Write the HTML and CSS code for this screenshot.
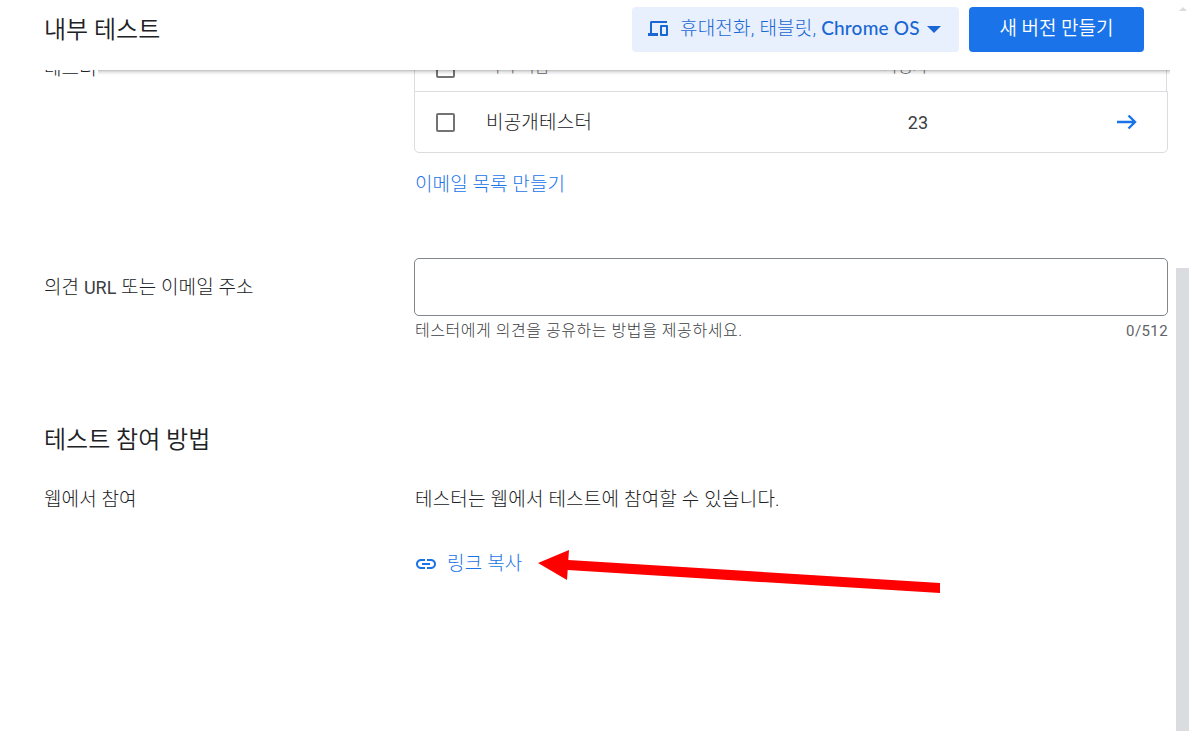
FILE: index.html
```html
<!DOCTYPE html>
<html lang="ko">

<head>
  <meta charset="UTF-8" />
  <meta name="viewport" content="width=device-width, initial-scale=1.0" />
  <title>내부 테스트</title>
  <link rel="stylesheet" href="styles.css">
</head>

<body>
  <header class="topbar">
    <h1>내부 테스트</h1>
    <button class="btn btn-devices">
      <svg class="devices-icon" viewBox="0 0 20 15" width="20" height="15"><path fill="currentColor" d="M3.500 0H19v2H4v10h6v3H0v-3h2V1.500C2 .7 2.700 0 3.500 0z"/><path fill="none" stroke="currentColor" stroke-width="2" stroke-linejoin="round" d="M13 5h6v9h-6z"/></svg>
      <span class="devices-text">휴대전화, 태블릿, <span class="product">Chrome OS</span></span>
      <span class="caret"></span>
    </button>
    <button class="btn btn-primary"><span>새 버전 만들기</span></button>
  </header>

  <main>
    <section class="row row-testers">
      <div class="label">테스터</div>
      <div class="field">
        <div class="list-head">
          <span class="checkbox"></span>
          <span class="name">목록 이름</span>
          <span class="count">사용자</span>
        </div>
        <div class="list-row">
          <span class="checkbox"></span>
          <span class="name">비공개테스터</span>
          <span class="count latin">23</span>
          <svg class="arrow-icon" viewBox="0 0 22 16" width="22" height="16"><path d="M1 8h18M12.500 1.500L19 8l-6.500 6.500" fill="none" stroke="currentColor" stroke-width="2.400"/></svg>
        </div>
        <a class="link">이메일 목록 만들기</a>
      </div>
    </section>

    <section class="row row-feedback">
      <div class="label">의견 <span class="latin">URL</span> 또는 이메일 주소</div>
      <div class="field">
        <input type="text" class="text-input">
        <div class="hint">
          <span class="hint-text">테스터에게 의견을 공유하는 방법을 제공하세요.</span>
          <span class="counter">0/512</span>
        </div>
      </div>
    </section>

    <h2>테스트 참여 방법</h2>

    <section class="row">
      <div class="label">웹에서 참여</div>
      <div class="field">
        <div class="desc">테스터는 웹에서 테스트에 참여할 수 있습니다.</div>
        <a class="link copy-link">
          <svg viewBox="2 7 20 10" width="20" height="10"><path fill="currentColor" d="M3.900 12c0-1.710 1.390-3.100 3.100-3.100h4V7H7c-2.760 0-5 2.240-5 5s2.240 5 5 5h4v-1.900H7c-1.710 0-3.100-1.390-3.100-3.100zM8 13h8v-2H8v2zm9-6h-4v1.900h4c1.710 0 3.100 1.390 3.100 3.100s-1.390 3.100-3.100 3.100h-4V17h4c2.760 0 5-2.240 5-5s-2.240-5-5-5z"/></svg>
          <span>링크 복사</span>
        </a>
      </div>
    </section>
  </main>

  <div class="scrollbar">
    <span class="scroll-up"></span>
    <span class="scroll-thumb"></span>
  </div>

  <svg class="pointer" viewBox="0 0 402 44" width="402" height="44"><path fill="#fe0000" d="M0 13L31 0l-.7 10L402 33v10L29.700 20l-.7 10z"/></svg>
</body>

</html>
```
FILE: styles.css
```css
* {
  box-sizing: border-box;
}

body {
  margin: 0;
  height: 731px;
  overflow: hidden;
  position: relative;
  background: #fff;
  color: #202124;
  font-family: Roboto, 'Noto Sans CJK KR', sans-serif;
  font-size: 19px;
  font-weight: 300;
  letter-spacing: 0.2px;
}

.topbar {
  position: fixed;
  top: 0;
  left: 0;
  z-index: 2;
  width: 1170px;
  height: 70px;
  padding: 7px 26px 0 44px;
  display: flex;
  align-items: flex-start;
  gap: 10px;
  background: #fff;
}

.topbar::after {
  content: '';
  position: absolute;
  top: 70px;
  left: 98px;
  right: 0;
  height: 5px;
  background: linear-gradient(rgba(0, 0, 0, 0.26), rgba(0, 0, 0, 0.1) 40%, rgba(0, 0, 0, 0));
}

h1 {
  margin: 0 auto 0 0;
  font-size: 24px;
  font-weight: 350;
  line-height: 46px;
  letter-spacing: 0;
  color: #202124;
}

.btn {
  height: 45px;
  border: 0;
  border-radius: 4px;
  display: flex;
  align-items: center;
  font-family: inherit;
  font-size: 19px;
  font-weight: 300;
  letter-spacing: 0.2px;
}

.btn-devices {
  width: 327px;
  padding: 0 18px 3px 16px;
  background: #e8f0fe;
  color: #1967d2;
}

.devices-text {
  margin-left: 12px;
  padding-bottom: 3px;
  white-space: nowrap;
}

.product {
  font-family: Lato, sans-serif;
  font-weight: 500;
}

.latin {
  font-size: 18px;
  font-weight: 400;
  letter-spacing: 0;
  color: #3c4043;
}

.caret {
  margin-left: auto;
  margin-top: 2px;
  border: 7px solid transparent;
  border-top-color: currentColor;
  border-bottom: 0;
}

.btn-primary {
  width: 175px;
  padding-bottom: 8px;
  justify-content: center;
  background: #1a73e8;
  color: #fff;
  font-weight: 350;
  letter-spacing: 0;
}

main {
  width: 1168px;
  padding: 31px 0 0 44px;
}

.row {
  display: flex;
}

.label {
  width: 370px;
  line-height: 28px;
  letter-spacing: 0.1px;
}

.field {
  width: 754px;
}

.row-testers .label {
  padding-top: 24px;
}

.list-head,
.list-row {
  display: flex;
  align-items: center;
  padding-left: 21px;
  border: 1px solid #dadce0;
}

.list-head {
  width: 753px;
  border-bottom: 0;
  height: 60px;
  padding-top: 14px;
  font-size: 16px;
  color: #5f6368;
}

.list-row {
  height: 62px;
  border-radius: 0 0 5px 5px;
}

.checkbox {
  width: 19px;
  height: 19px;
  border: 2px solid #737373;
  border-radius: 2px;
}

.name {
  margin-left: 31px;
  padding-bottom: 3px;
  width: 300px;
}

.count {
  width: 142px;
  text-align: right;
}

.list-head .name,
.list-head .count {
  padding-bottom: 7px;
}

.arrow-icon {
  margin-left: 188px;
  color: #1a73e8;
}

.link {
  display: block;
  color: #1a73e8;
}

.row-testers .link {
  margin-top: 18px;
  padding-left: 1px;
  line-height: 28px;
  letter-spacing: 0.1px;
}

.row-feedback {
  margin-top: 59px;
}

.row-feedback .label {
  padding-top: 16px;
}

.text-input {
  display: block;
  width: 100%;
  height: 58px;
  border: 1px solid #80868b;
  border-radius: 5px;
}

.hint {
  display: flex;
  justify-content: space-between;
  padding-left: 1px;
  font-size: 16px;
  line-height: 30px;
  letter-spacing: 0.55px;
  color: #3c4043;
}

.counter {
  font-size: 15px;
  font-weight: 400;
  letter-spacing: 0.4px;
  color: #5f6368;
}

h2 {
  margin: 77px 0 29px;
  font-size: 24px;
  font-weight: 350;
  line-height: 34px;
  letter-spacing: 0;
  color: #202124;
}

.desc {
  padding-left: 1px;
  line-height: 28px;
}

.copy-link {
  display: flex;
  align-items: center;
  gap: 11px;
  margin-top: 36px;
  padding-left: 2px;
  line-height: 28px;
}

.scrollbar {
  position: fixed;
  top: 0;
  right: 0;
  width: 13px;
  height: 731px;
}

.scroll-up {
  position: absolute;
  top: 7px;
  left: 3px;
  border: 4px solid transparent;
  border-bottom-color: #dadce0;
  border-top: 0;
}

.scroll-thumb {
  position: absolute;
  top: 268px;
  left: 0;
  width: 13px;
  height: 463px;
  background: #dadce0;
}

/* red arrow pointing at the copy link */
.pointer {
  position: absolute;
  top: 550px;
  left: 538px;
}
```
